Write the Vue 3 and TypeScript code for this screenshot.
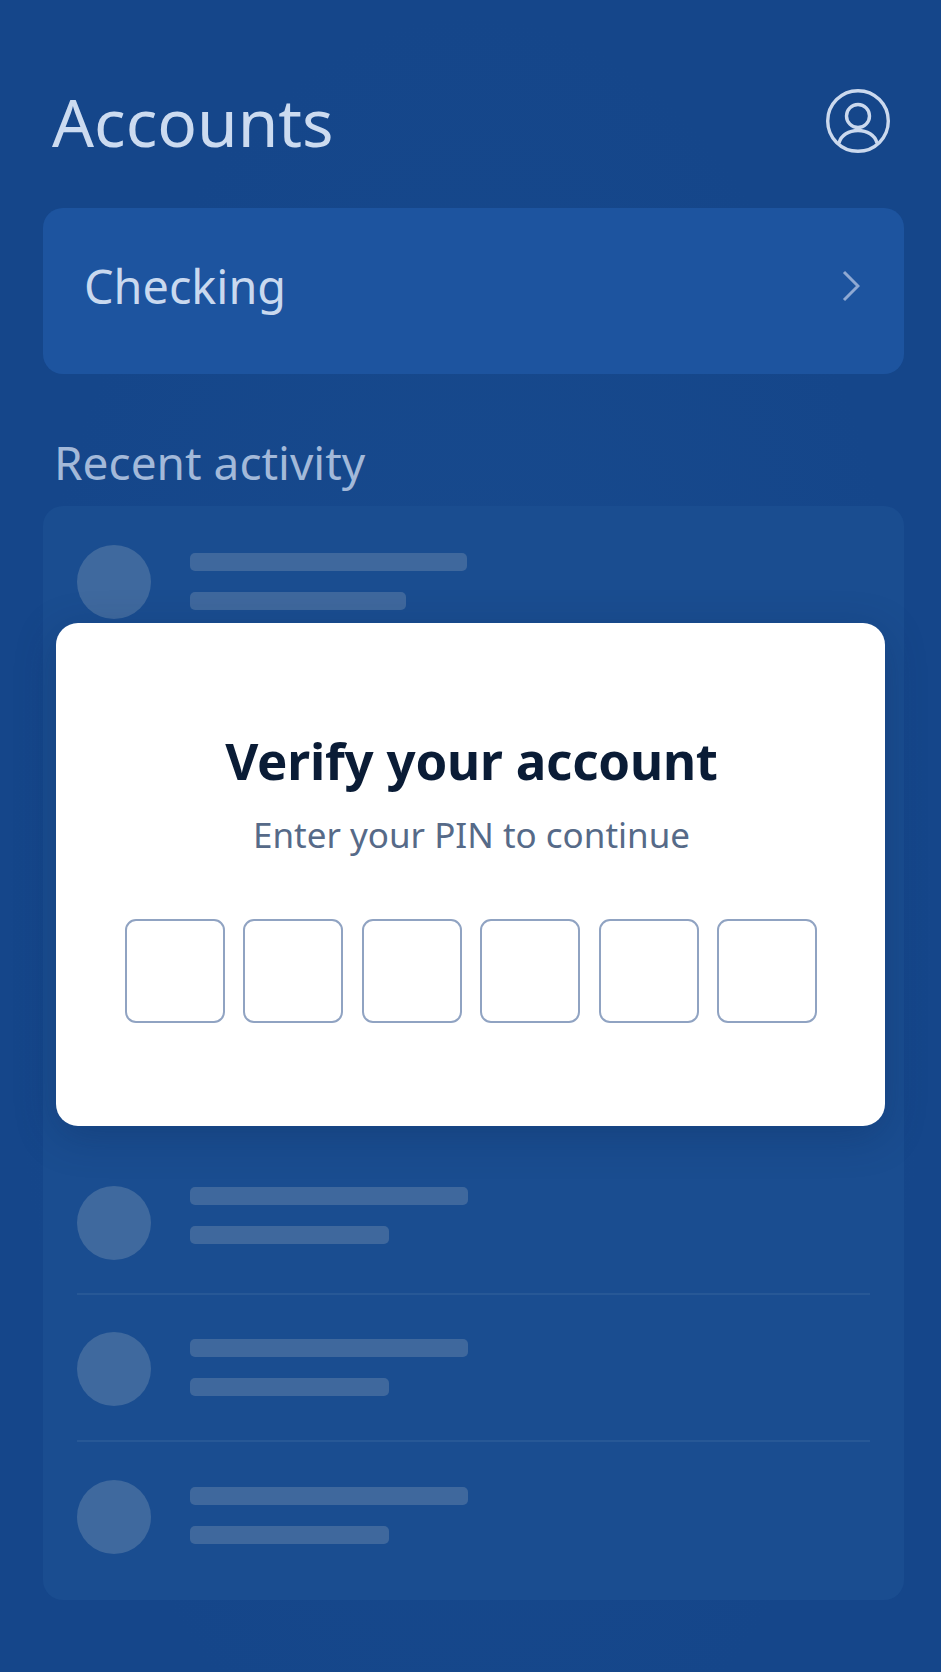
<script setup lang="ts">
interface Row {
  first: number
  second: number
  kind?: 'first' | 'tall'
}

const rows: Row[] = [
  { first: 277, second: 216, kind: 'first' },
  { first: 278, second: 199 },
  { first: 278, second: 199 },
  { first: 278, second: 199, kind: 'tall' },
  { first: 278, second: 199 },
  { first: 278, second: 199 },
]

const pinSlots = [1, 2, 3, 4, 5, 6]
</script>

<template>
  <div class="page">
    <header class="top">
      <h1>Accounts</h1>
      <svg class="avatar" width="64" height="64" viewBox="0 0 64 64" fill="none">
        <circle cx="32" cy="32" r="30.3" />
        <circle cx="32" cy="27" r="11.5" />
        <path d="M13 54C15 46 23 41.5 32 41.5S49 46 51 54" />
      </svg>
    </header>

    <div class="account">
      <span>Checking</span>
      <svg width="18" height="32" viewBox="0 0 18 32" fill="none">
        <path d="M2 2L16 16L2 30" />
      </svg>
    </div>

    <h2>Recent activity</h2>

    <section class="activity">
      <div v-for="(row, i) in rows" :key="i" class="row" :class="row.kind">
        <div class="dot"></div>
        <div class="lines">
          <div class="line" :style="{ width: row.first + 'px' }"></div>
          <div class="line" :style="{ width: row.second + 'px' }"></div>
        </div>
      </div>
    </section>

    <div class="modal">
      <h3>Verify your account</h3>
      <p>Enter your PIN to continue</p>
      <div class="pin">
        <div v-for="n in pinSlots" :key="n" class="slot"></div>
      </div>
    </div>
  </div>
</template>

<style scoped>
.page {
  position: relative;
  box-sizing: border-box;
  width: 941px;
  height: 1672px;
  overflow: hidden;
  padding: 0 37px 0 43px;
  font-family: "Noto Sans", "Open Sans", sans-serif;
  background:
    radial-gradient(ellipse at 50% 55%, rgba(30, 84, 150, 0.35), rgba(20, 68, 136, 0) 70%),
    #15468a;
}

.top {
  display: flex;
  align-items: center;
  justify-content: space-between;
  height: 208px;
  padding: 36px 14px 0 9px;
  box-sizing: border-box;
}

h1 {
  margin: 0;
  font-size: 65.8px;
  font-weight: 400;
  line-height: 84px;
  color: #ccdbf0;
}

.avatar {
  stroke: #cbd9ee;
  stroke-width: 3.4;
  margin-top: -2px;
}

.account {
  display: flex;
  align-items: center;
  justify-content: space-between;
  box-sizing: border-box;
  height: 166px;
  padding: 0 44px 11px 41px;
  border-radius: 20px;
  background: #1d549f;
  color: #c9d9ef;
  font-size: 46.8px;
}

.account svg {
  stroke: #8fa9d3;
  stroke-width: 3;
}

h2 {
  margin: 57px 0 0 11px;
  font-size: 46px;
  font-weight: 400;
  line-height: 63px;
  color: #a3b9d9;
}

.activity {
  box-sizing: border-box;
  height: 1094px;
  margin-top: 12px;
  padding: 0 34px;
  border-radius: 20px;
  background: #1a4d90;
}

.row {
  display: flex;
  align-items: center;
  gap: 39px;
  box-sizing: border-box;
  height: 147px;
  padding-top: 2px;
  border-bottom: 2px solid #275896;
}

.row.first {
  height: 148px;
  padding-top: 5px;
}

.row:last-child {
  border-bottom: 0;
}

.row.tall {
  height: 347px;
  padding-top: 205px;
}

.dot {
  flex: none;
  width: 74px;
  height: 74px;
  border-radius: 50%;
  background: #3f699e;
}

.lines {
  display: flex;
  flex-direction: column;
  gap: 21px;
  margin-bottom: 3px;
}

.first .lines {
  margin-bottom: 0;
}

.tall .lines {
  margin-bottom: 16px;
}

.line {
  height: 18px;
  border-radius: 5px;
  background: #3f689d;
}

.modal {
  position: absolute;
  left: 56px;
  top: 623px;
  box-sizing: border-box;
  width: 829px;
  height: 503px;
  padding-top: 102px;
  border-radius: 22px;
  background: #fff;
  box-shadow: 0 10px 40px rgba(10, 35, 80, 0.28);
  text-align: center;
}

h3 {
  margin: 0;
  padding-left: 2px;
  font-size: 51px;
  font-weight: 700;
  line-height: 70px;
  letter-spacing: -0.2px;
  color: #0a1c36;
}

p {
  margin: 15px 0 0;
  padding-left: 2px;
  font-size: 35px;
  line-height: 50px;
  color: #566a88;
}

.pin {
  display: flex;
  justify-content: center;
  gap: 18.4px;
  margin-top: 59px;
  padding-left: 1px;
}

.slot {
  box-sizing: border-box;
  width: 100px;
  height: 104px;
  border: 2px solid #90a3c2;
  border-radius: 11px;
}
</style>
